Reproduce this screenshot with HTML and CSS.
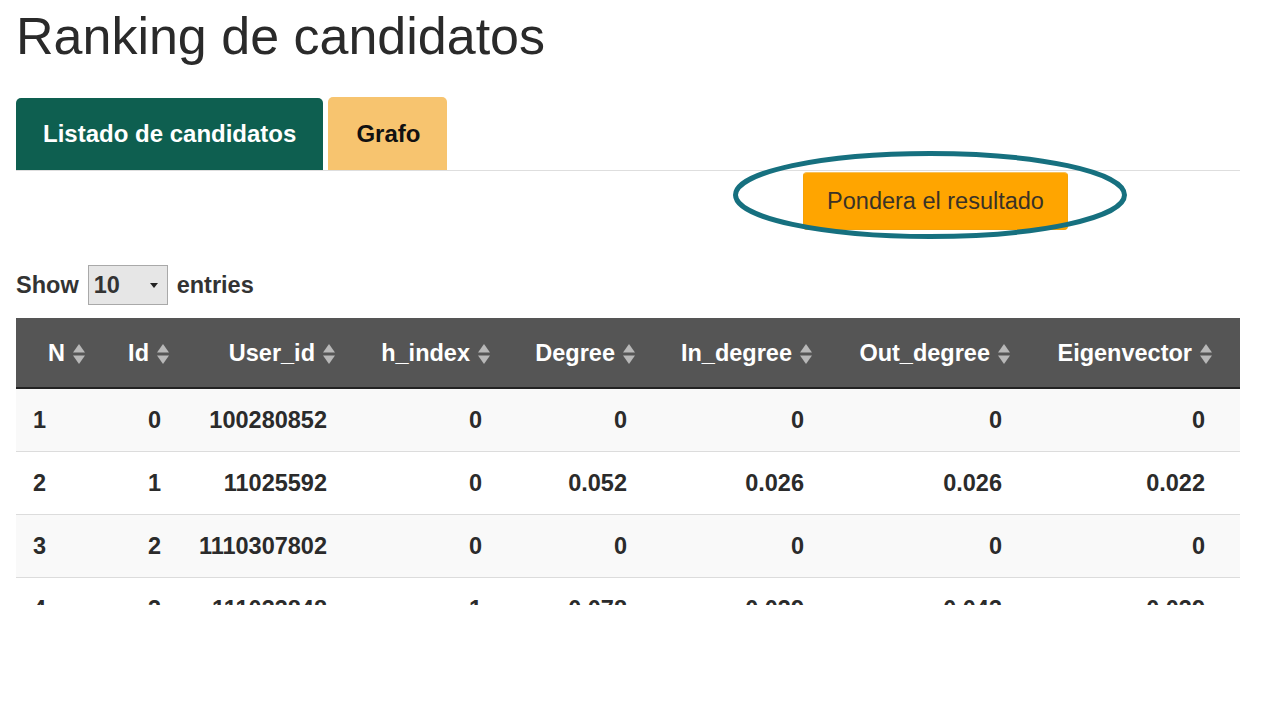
FILE: index.html
```html
<!DOCTYPE html>
<html lang="es">
<head>
<meta charset="utf-8">
<title>Ranking de candidatos</title>
<link rel="stylesheet" href="styles.css">
</head>
<body>
<div class="page">
  <h2 class="title">Ranking de candidatos</h2>
  <ul class="tabs">
    <li class="tab tab-active">Listado de candidatos</li>
    <li class="tab tab-other">Grafo</li>
  </ul>
  <div class="actions">
    <button class="btn">Pondera el resultado</button>
  </div>
  <div class="length">
    <span>Show</span>
    <span class="select-wrap"><select class="select"><option>10</option><option>25</option><option>50</option></select></span>
    <span>entries</span>
  </div>
  <div class="table-wrap">
    <table class="grid">
      <colgroup>
        <col class="c-n"><col class="c-id"><col class="c-user"><col class="c-h"><col class="c-deg"><col class="c-in"><col class="c-out"><col class="c-eig">
      </colgroup>
      <thead>
        <tr>
          <th><span class="th-in">N<svg class="sort" viewBox="0 0 14 22" width="14" height="22"><polygon points="7,1 13,9.5 1,9.5"/><polygon points="1,12.5 13,12.5 7,21"/></svg></span></th>
          <th><span class="th-in">Id<svg class="sort" viewBox="0 0 14 22" width="14" height="22"><polygon points="7,1 13,9.5 1,9.5"/><polygon points="1,12.5 13,12.5 7,21"/></svg></span></th>
          <th><span class="th-in">User_id<svg class="sort" viewBox="0 0 14 22" width="14" height="22"><polygon points="7,1 13,9.5 1,9.5"/><polygon points="1,12.5 13,12.5 7,21"/></svg></span></th>
          <th><span class="th-in">h_index<svg class="sort" viewBox="0 0 14 22" width="14" height="22"><polygon points="7,1 13,9.5 1,9.5"/><polygon points="1,12.5 13,12.5 7,21"/></svg></span></th>
          <th><span class="th-in">Degree<svg class="sort" viewBox="0 0 14 22" width="14" height="22"><polygon points="7,1 13,9.5 1,9.5"/><polygon points="1,12.5 13,12.5 7,21"/></svg></span></th>
          <th><span class="th-in">In_degree<svg class="sort" viewBox="0 0 14 22" width="14" height="22"><polygon points="7,1 13,9.5 1,9.5"/><polygon points="1,12.5 13,12.5 7,21"/></svg></span></th>
          <th><span class="th-in">Out_degree<svg class="sort" viewBox="0 0 14 22" width="14" height="22"><polygon points="7,1 13,9.5 1,9.5"/><polygon points="1,12.5 13,12.5 7,21"/></svg></span></th>
          <th><span class="th-in">Eigenvector<svg class="sort" viewBox="0 0 14 22" width="14" height="22"><polygon points="7,1 13,9.5 1,9.5"/><polygon points="1,12.5 13,12.5 7,21"/></svg></span></th>
        </tr>
      </thead>
      <tbody>
        <tr><td class="first">1</td><td>0</td><td>100280852</td><td>0</td><td>0</td><td>0</td><td>0</td><td>0</td></tr>
        <tr><td class="first">2</td><td>1</td><td>11025592</td><td>0</td><td>0.052</td><td>0.026</td><td>0.026</td><td>0.022</td></tr>
        <tr><td class="first">3</td><td>2</td><td>1110307802</td><td>0</td><td>0</td><td>0</td><td>0</td><td>0</td></tr>
        <tr><td class="first">4</td><td>3</td><td>111033848</td><td>1</td><td>0.078</td><td>0.039</td><td>0.043</td><td>0.039</td></tr>
      </tbody>
    </table>
  </div>
</div>
<svg class="annot" viewBox="0 0 394 88" width="394" height="88"><ellipse cx="197" cy="44" rx="194.5" ry="41.5"/></svg>
</body>
</html>
```
FILE: styles.css
```css
html, body {
  margin: 0;
  background: #fff;
}
body {
  position: relative;
  font-family: "Liberation Sans", Arial, sans-serif;
  color: #333;
  height: 720px;
  overflow: hidden;
}
.page {
  width: 1224px;
  padding-left: 16px;
}
.title {
  margin: 0;
  padding-top: 6px;
  font-size: 52px;
  line-height: 60px;
  font-weight: normal;
  color: #2a2a2a;
}
.tabs {
  display: flex;
  align-items: flex-end;
  gap: 5px;
  margin: 31px 0 0;
  padding: 0;
  list-style: none;
  border-bottom: 1px solid #dedede;
}
.tab {
  height: 72px;
  line-height: 72px;
  padding: 0 27px;
  font-size: 24px;
  font-weight: bold;
  border-radius: 5px 5px 0 0;
}
.tab-active {
  background: #0e5f50;
  color: #fff;
}
.tab-other {
  height: 73px;
  line-height: 73px;
  padding: 0 27px 0 28px;
  background: #f7c46f;
  color: #111;
}
.actions {
  margin-top: 1px;
}
.btn {
  margin-left: 787px;
  width: 265px;
  height: 58px;
  background: #ffa500;
  border: 1px solid #f3a20a;
  border-top-color: #f7c15a;
  border-radius: 4px;
  font-family: "Liberation Sans", Arial, sans-serif;
  font-size: 23.5px;
  color: #3a3226;
  padding: 0;
}
.length {
  display: flex;
  align-items: center;
  gap: 9px;
  margin-top: 35px;
  height: 40px;
  font-size: 23.5px;
  font-weight: bold;
  color: #333;
}
.select-wrap {
  position: relative;
  width: 80px;
  height: 40px;
}
.select {
  -webkit-appearance: none;
  appearance: none;
  width: 80px;
  height: 40px;
  margin: 0;
  padding: 0 0 0 5px;
  background: #e6e6e6;
  border: 1px solid #a9a9a9;
  border-radius: 0;
  font-family: "Liberation Sans", Arial, sans-serif;
  font-size: 23.5px;
  font-weight: bold;
  color: #333;
}
.select-wrap::after {
  content: "";
  position: absolute;
  right: 10px;
  top: 18px;
  border-left: 4px solid transparent;
  border-right: 4px solid transparent;
  border-top: 5px solid #222;
  pointer-events: none;
}
.table-wrap {
  margin-top: 13px;
  width: 1224px;
  height: 287px;
  overflow: hidden;
}
.grid {
  border-collapse: collapse;
  table-layout: fixed;
  width: 1224px;
  font-size: 23.5px;
}
.c-n { width: 84px; }
.c-id { width: 84px; }
.c-user { width: 166px; }
.c-h { width: 155px; }
.c-deg { width: 145px; }
.c-in { width: 177px; }
.c-out { width: 198px; }
.c-eig { width: 215px; }
.grid th {
  background: #555;
  color: #fff;
  height: 69px;
  padding: 0 14px 0 0;
  text-align: right;
  font-weight: bold;
  white-space: nowrap;
  border-bottom: 2px solid #222;
}
.grid th:last-child {
  padding-right: 27px;
}
.th-in {
  display: inline-flex;
  align-items: center;
  gap: 7px;
  vertical-align: middle;
}
.sort {
  fill: #b8b8b8;
  margin-top: 1px;
}
.grid td {
  height: 62px;
  padding: 0 23px 0 0;
  text-align: right;
  font-weight: bold;
  color: #2b2b2b;
  border-top: 1px solid #dcdcdc;
  white-space: nowrap;
}
.grid td:last-child {
  padding-right: 35px;
}
.grid tbody tr:first-child td {
  border-top: none;
}
.grid tbody tr:nth-child(odd) td {
  background: #f9f9f9;
}
.grid tbody tr:nth-child(even) td {
  background: #fff;
}
.grid td.first {
  text-align: left;
  padding-left: 17px;
}
.annot {
  position: absolute;
  left: 733px;
  top: 151px;
  pointer-events: none;
  fill: none;
  stroke: #16707f;
  stroke-width: 5;
}
```
